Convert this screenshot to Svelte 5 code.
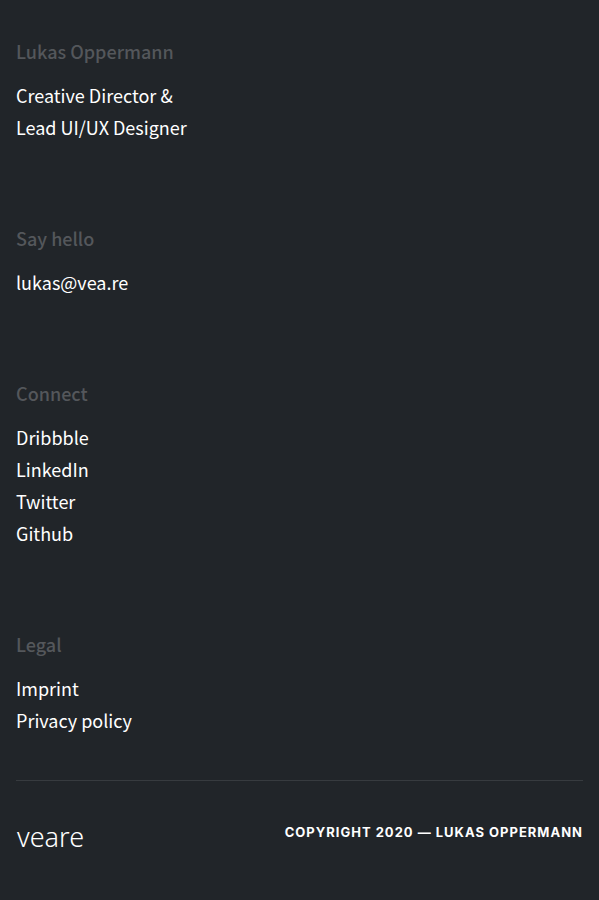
<script>
  const groups = [
    {
      title: 'Say hello',
      links: [{ label: 'lukas@vea.re', href: 'mailto:lukas@vea.re' }]
    },
    {
      title: 'Connect',
      links: [
        { label: 'Dribbble', href: '#dribbble' },
        { label: 'LinkedIn', href: '#linkedin' },
        { label: 'Twitter', href: '#twitter' },
        { label: 'Github', href: '#github' }
      ]
    },
    {
      title: 'Legal',
      links: [
        { label: 'Imprint', href: '#imprint' },
        { label: 'Privacy policy', href: '#privacy' }
      ]
    }
  ];
</script>

<footer>
  <div class="groups">
    <section>
      <h2>Lukas Oppermann</h2>
      <p>Creative Director &amp;<br />Lead UI/UX Designer</p>
    </section>
    {#each groups as group}
      <section>
        <h2>{group.title}</h2>
        <ul>
          {#each group.links as link}
            <li><a href={link.href}>{link.label}</a></li>
          {/each}
        </ul>
      </section>
    {/each}
  </div>
  <div class="bottom">
    <a class="logo" href="#home">veare</a>
    <small>Copyright 2020 — Lukas Oppermann</small>
  </div>
</footer>

<style>
  :global(body) {
    margin: 0;
    background: #212529;
  }

  footer {
    box-sizing: border-box;
    min-height: 100vh;
    padding: 35px 16px 0;
    background: #212529;
    color: #fff;
    font: 400 18px/32px "Noto Sans CJK SC", sans-serif;
  }

  .groups {
    display: flex;
    flex-direction: column;
    gap: 79px;
  }

  h2 {
    margin: 0 0 12px;
    color: #54575b;
    font-size: 18px;
    font-weight: 500;
    line-height: 32px;
  }

  p,
  ul {
    margin: 0;
    padding: 0;
    list-style: none;
  }

  a {
    color: inherit;
    text-decoration: none;
  }

  .bottom {
    display: flex;
    justify-content: space-between;
    align-items: flex-start;
    margin-top: 44px;
    padding-top: 39px;
    border-top: 1px solid #373b3f;
  }

  .logo {
    padding-left: 1px;
    font: 300 27px/34px "Noto Sans", "Open Sans", sans-serif;
  }

  small {
    font: 700 13px/24px Inter, sans-serif;
    letter-spacing: 1px;
    text-transform: uppercase;
  }
</style>
